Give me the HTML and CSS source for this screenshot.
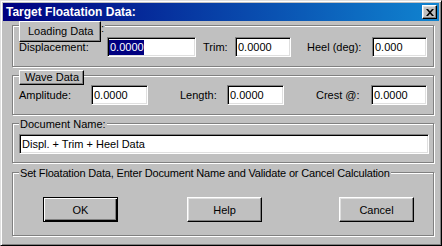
FILE: index.html
```html
<!DOCTYPE html>
<html>
<head>
<meta charset="utf-8">
<title>Target Floatation Data</title>
<link rel="stylesheet" href="styles.css">
</head>
<body>
<div class="window">
  <div class="titlebar">
    <span class="title">Target Floatation Data:</span>
    <span class="close"><svg width="8" height="7" viewBox="0 0 8 7"><path d="M0 0h2l2 2.2L6 0h2L5 3.5 8 7H6L4 4.8 2 7H0l3-3.5z" fill="#000"/></svg></span>
  </div>
  <div class="body">
    <div class="group g1">
      <span class="tab tab-load">Loading Data</span>
      <span class="tab-colon">:</span>
      <div class="row">
        <span class="lbl w-disp">Displacement:</span>
        <div class="field in-disp"><span class="sel">0.0000</span></div>
        <span class="lbl w-trim">Trim:</span>
        <div class="field in-trim">0.0000</div>
        <span class="lbl w-heel">Heel (deg):</span>
        <div class="field in-heel">0.000</div>
      </div>
    </div>
    <div class="group g2">
      <span class="tab tab-wave">Wave Data</span>
      <div class="row">
        <span class="lbl w-amp">Amplitude:</span>
        <div class="field in-57">0.0000</div>
        <span class="lbl w-len">Length:</span>
        <div class="field in-57">0.0000</div>
        <span class="lbl w-crest">Crest @:</span>
        <div class="field in-56">0.0000</div>
      </div>
    </div>
    <div class="group g3">
      <span class="legend">Document Name:</span>
      <div class="field in-doc">Displ. + Trim + Heel Data</div>
    </div>
    <div class="group g4">
      <span class="legend legend-long">Set Floatation Data, Enter Document Name and Validate or Cancel Calculation</span>
      <div class="buttons">
        <button class="btn btn-default">OK</button>
        <button class="btn btn-help">Help</button>
        <button class="btn btn-cancel">Cancel</button>
      </div>
    </div>
  </div>
</div>
</body>
</html>
```
FILE: styles.css
```css
* { box-sizing: border-box; }
html, body { margin: 0; padding: 0; }
body {
  width: 442px;
  height: 246px;
  overflow: hidden;
  background: #c0c0c0;
  font-family: "Liberation Sans", Arial, sans-serif;
  font-size: 11px;
  color: #000;
}
.window {
  width: 442px;
  height: 246px;
  background: #c0c0c0;
  border: 1px solid;
  border-color: #dfdfdf #000 #000 #dfdfdf;
  box-shadow: inset 1px 1px #fff, inset -1px -1px #808080;
  padding: 2px;
  display: flex;
  flex-direction: column;
}
.titlebar {
  height: 18px;
  flex: none;
  background: linear-gradient(to right, #000080, #1084d0);
  display: flex;
  align-items: center;
  justify-content: space-between;
  padding: 0 2px 0 3px;
}
.title {
  color: #fff;
  font-weight: bold;
  font-size: 12px;
  line-height: 14px;
}
.close {
  width: 15px;
  height: 14px;
  background: #c0c0c0;
  border: 1px solid;
  border-color: #fff #000 #000 #fff;
  box-shadow: inset -1px -1px #808080, inset 1px 1px #dfdfdf;
  display: flex;
  align-items: center;
  justify-content: center;
}
.close svg { display: block; }
.body { padding-left: 9px; }
.group {
  position: relative;
  width: 422px;
  border: 1px solid #808080;
  box-shadow: 1px 1px 0 #fff, inset 1px 1px 0 #fff;
  flex: none;
}
.g1 { margin-top: 4px; height: 42px; padding: 11px 0 0 6px; }
.g2 { margin-top: 8px; height: 40px; padding: 9px 0 0 6px; }
.g3 { margin-top: 8px; height: 40px; padding: 10px 0 0 6px; }
.g4 { margin-top: 9px; height: 64px; padding: 24px 0 0 30px; }
.row { display: flex; align-items: center; }
.lbl { flex: none; line-height: 13px; }
.w-disp { width: 88px; }
.w-trim { width: 39px; padding-left: 7px; }
.w-heel { width: 81px; padding-left: 16px; }
.w-amp { width: 72px; }
.w-len { width: 79px; padding-left: 32px; }
.w-crest { width: 87px; padding-left: 32px; }
.field {
  flex: none;
  height: 20px;
  background: #fff;
  border: 1px solid;
  border-color: #808080 #fff #fff #808080;
  box-shadow: inset 1px 1px #000, inset -1px -1px #dfdfdf;
  padding: 0 2px;
  display: flex;
  align-items: center;
  line-height: 13px;
  white-space: nowrap;
}
.in-disp { width: 89px; }
.in-trim { width: 56px; }
.in-heel { width: 55px; }
.in-57 { width: 57px; }
.in-56 { width: 56px; }
.in-doc { width: 410px; }
.sel {
  background: #000080;
  color: #fff;
  line-height: 15px;
  margin-left: -1px;
  padding-left: 1px;
}
.tab {
  position: absolute;
  left: 6px;
  background: #c0c0c0;
  border: 1px solid;
  border-color: #fff #000 #000 #fff;
  box-shadow: inset -1px -1px #808080;
  display: flex;
  align-items: center;
  line-height: 13px;
  white-space: nowrap;
}
.tab-load { top: -5px; width: 82px; height: 21px; padding-left: 8px; }
.tab-wave { top: -6px; width: 65px; height: 15px; padding-left: 5px; }
.tab-colon {
  position: absolute;
  left: 88px;
  top: -4px;
  line-height: 13px;
  background: #c0c0c0;
  padding-right: 1px;
}
.legend {
  position: absolute;
  left: 6px;
  top: -6px;
  background: #c0c0c0;
  padding: 0 1px;
  line-height: 13px;
  white-space: nowrap;
}
.legend-long { letter-spacing: -0.18px; }
.buttons { display: flex; }
.btn {
  flex: none;
  width: 75px;
  height: 25px;
  margin: 0;
  padding: 0;
  font: inherit;
  color: #000;
  background: #c0c0c0;
  border: 1px solid;
  border-color: #fff #000 #000 #fff;
  box-shadow: inset -1px -1px #808080, inset 1px 1px #dfdfdf;
  border-radius: 0;
}
.btn-default {
  border-color: #000;
  box-shadow: inset 1px 1px #fff, inset -1px -1px #000, inset -2px -2px #808080;
}
.btn-help { margin-left: 69px; }
.btn-cancel { margin-left: 77px; }
```
